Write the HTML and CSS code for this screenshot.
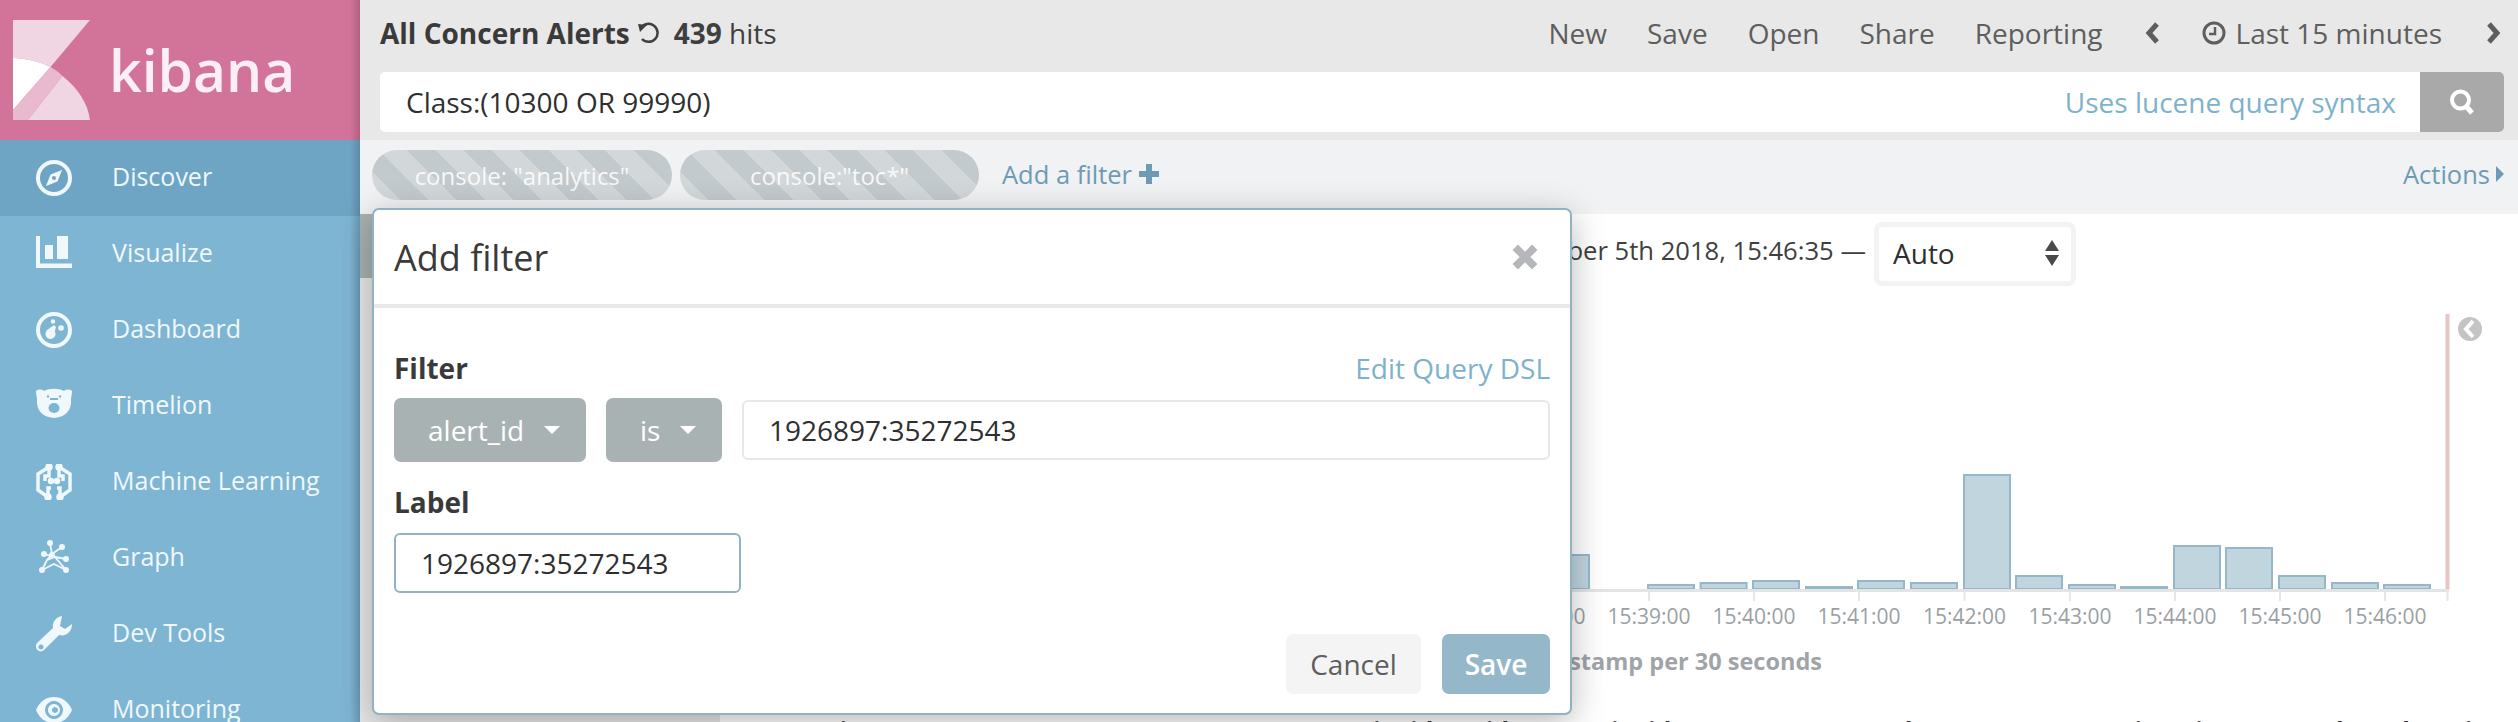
FILE: index.html
```html
<!DOCTYPE html>
<html lang="en">
<head>
<meta charset="utf-8">
<title>Kibana Discover</title>
<link rel="stylesheet" href="styles.css">
</head>
<body>
<div class="app">
  <aside class="sidebar">
    <div class="brand">
      <svg class="brand-mark" viewBox="0 0 77 100" width="77" height="100">
        <path d="M0 0H77L37.5 47C27 42 14 38.5 0 38Z" fill="#f0d6e2"/>
        <path d="M0 38C14 38.5 27 42 37.5 47L0 90Z" fill="#ffffff"/>
        <path d="M0 90L37.5 47C41 49 46 52 49.5 56L15 100H0Z" fill="#e9b9cf"/>
        <path d="M15 100L49.5 56C65 68 75 84 77 100Z" fill="#f0d6e2"/>
      </svg>
      <span class="brand-name">kibana</span>
    </div>
    <nav class="nav">
      <a class="nav-item active">
        <svg class="nav-icon" viewBox="0 0 36 36"><circle cx="18" cy="18" r="16" fill="none" stroke="currentColor" stroke-width="4"/><path d="M26 10L21.5 21.5L10 26L14.500 14.500Z" fill="currentColor"/><circle cx="18" cy="18" r="2" fill="#6fa5c4"/></svg>
        <span>Discover</span>
      </a>
      <a class="nav-item">
        <svg class="nav-icon" viewBox="0 0 36 36"><path d="M0 0H4V27.500H36V32H0Z" fill="currentColor"/><rect x="9" y="9" width="8" height="14" fill="currentColor"/><rect x="21" y="0" width="11" height="23" fill="currentColor"/></svg>
        <span>Visualize</span>
      </a>
      <a class="nav-item">
        <svg class="nav-icon" viewBox="0 0 36 36"><circle cx="18" cy="18" r="16" fill="none" stroke="currentColor" stroke-width="4"/><path d="M10.500 18.500L18 13L20 15L17.500 24.500Z" fill="currentColor"/><circle cx="14.500" cy="22" r="5" fill="currentColor"/><circle cx="17" cy="9.500" r="2.200" fill="currentColor"/><circle cx="25" cy="16" r="2.800" fill="currentColor"/></svg>
        <span>Dashboard</span>
      </a>
      <a class="nav-item">
        <svg class="nav-icon" viewBox="0 0 36 36"><path d="M0 3C2 1 6 1 8 3C13 0 23 0 28 3C30 1 34 1 36 3C36 7 35 9 35 11C36 22 30 29 18 30C6 29 0 22 1 11C1 9 0 7 0 3Z" fill="currentColor"/><ellipse cx="18" cy="20" rx="5.500" ry="5" fill="#7eb5d3"/><rect x="14" y="10" width="8" height="2" fill="#7eb5d3"/><circle cx="12" cy="8.500" r="1.200" fill="#7eb5d3"/><circle cx="24" cy="8.500" r="1.200" fill="#7eb5d3"/></svg>
        <span>Timelion</span>
      </a>
      <a class="nav-item">
        <svg class="nav-icon" viewBox="0 0 36 36" fill="none" stroke="currentColor" stroke-width="3.500"><path d="M13 3L2 10V26L12 33"/><path d="M23 3L34 10V26L24 33"/><path d="M13 3V12H9V17"/><path d="M23 3V12H27V17"/><path d="M12 33V24H15"/><path d="M24 33V24H21"/><circle cx="13" cy="3" r="2" fill="currentColor"/><circle cx="23" cy="3" r="2" fill="currentColor"/><circle cx="12" cy="33" r="2" fill="currentColor"/><circle cx="24" cy="33" r="2" fill="currentColor"/><circle cx="15" cy="17" r="1.500" fill="currentColor"/><circle cx="21" cy="17" r="1.500" fill="currentColor"/></svg>
        <span>Machine Learning</span>
      </a>
      <a class="nav-item">
        <svg class="nav-icon" viewBox="0 0 36 36"><g fill="none" stroke="currentColor" stroke-width="1.800"><path d="M14 3L16 14L11 20L6 30"/><path d="M26 7L16 14"/><path d="M8 14L19 17L30 19"/><path d="M11 20L19 17L30 30L18 24L6 30"/></g><g fill="currentColor"><circle cx="14" cy="3" r="3"/><circle cx="26" cy="7" r="3"/><circle cx="8" cy="14" r="3"/><circle cx="16" cy="15" r="3"/><circle cx="30" cy="19" r="3"/><circle cx="6" cy="30" r="3"/><circle cx="30" cy="30" r="3"/></g></svg>
        <span>Graph</span>
      </a>
      <a class="nav-item">
        <svg class="nav-icon" viewBox="0 0 36 36"><path fill-rule="evenodd" d="M26 0C20 1 16 6 17 12L1 27C-1 30 0 34 3 35C5 36 7 35 9 33L23 19C30 21 36 16 36 8L29 13L24 10L25 5ZM5 28.500A2.500 2.500 0 1 0 5.010 28.500Z" fill="currentColor"/></svg>
        <span>Dev Tools</span>
      </a>
      <a class="nav-item">
        <svg class="nav-icon" viewBox="0 0 36 36"><path fill-rule="evenodd" d="M0 18C4 9 10 5 18 5C26 5 32 9 36 18C32 27 26 31 18 31C10 31 4 27 0 18ZM18 9A9 9 0 1 0 18.010 9ZM18 12A6 6 0 1 1 17.990 12ZM19 15A3 3 0 1 0 19.010 15Z" fill="currentColor"/></svg>
        <span>Monitoring</span>
      </a>
    </nav>
  </aside>

  <main class="main">
    <header class="topbar">
      <div class="topbar-row">
        <div class="title">
          <strong>All Concern Alerts</strong>
          <svg class="reset-icon" viewBox="0 0 22 22"><path d="M3 6A9 9 0 1 1 4 17" fill="none" stroke="#3f3f3f" stroke-width="2.500"/><path d="M0 2L9 3L2 10Z" fill="#3f3f3f"/></svg>
          <span class="hits"><strong>439</strong> hits</span>
        </div>
        <div class="menu">
          <a>New</a>
          <a>Save</a>
          <a>Open</a>
          <a>Share</a>
          <a>Reporting</a>
          <div class="timepicker">
            <svg class="chev" viewBox="0 0 16 24"><path d="M12 3L4 12L12 21" fill="none" stroke="currentColor" stroke-width="5"/></svg>
            <span class="range">
              <svg class="clock" viewBox="0 0 24 24"><circle cx="12" cy="12" r="10" fill="none" stroke="currentColor" stroke-width="3"/><path d="M13 6V13H7" fill="none" stroke="currentColor" stroke-width="2.500"/></svg>
              Last 15 minutes
            </span>
            <svg class="chev" viewBox="0 0 16 24"><path d="M4 3L12 12L4 21" fill="none" stroke="currentColor" stroke-width="5"/></svg>
          </div>
        </div>
      </div>
      <div class="query">
        <span class="query-text">Class:(10300 OR 99990)</span>
        <a class="query-hint">Uses lucene query syntax</a>
        <div class="query-btn">
          <svg viewBox="0 0 28 28" width="28" height="28"><circle cx="12.500" cy="12" r="8.500" fill="none" stroke="#fff" stroke-width="4"/><path d="M18 18L24 25" stroke="#fff" stroke-width="5"/></svg>
        </div>
      </div>
    </header>

    <section class="filterbar">
      <span class="pill pill-a">console: "analytics"</span>
      <span class="pill pill-b">console:"toc*"</span>
      <a class="add-filter">Add a filter <svg class="plus" viewBox="0 0 20 20"><path d="M7 0H13V7H20V13H13V20H7V13H0V7H7Z" fill="currentColor"/></svg></a>
      <a class="actions">Actions <svg class="caret" viewBox="0 0 8 18"><path d="M0 1L8 9L0 17Z" fill="currentColor"/></svg></a>
    </section>

    <div class="content">
      <aside class="fields"><div class="fields-head"></div></aside>
      <section class="results">
        <div class="timerow">
          <span class="timespan">October 5th 2018, 15:31:35 — October 5th 2018, 15:46:35 —</span>
          <div class="interval">
            <span>Auto</span>
            <svg class="updown" viewBox="0 0 14 26"><path d="M7 0L14 11H0Z M0 15H14L7 26Z" fill="#4a4a4a"/></svg>
          </div>
        </div>
        <div class="chart-wrap">
          <svg class="chart" viewBox="720 300 1798 384" width="1798" height="384">
            <g class="bars">
              <rect x="1438" y="560" width="46" height="29"/>
              <rect x="1490" y="575" width="46" height="14"/>
              <rect x="1543" y="555" width="46" height="34"/>
              <rect x="1648" y="585" width="46" height="4"/>
              <rect x="1700.600" y="583" width="46" height="6"/>
              <rect x="1753" y="581" width="46" height="8"/>
              <rect x="1806" y="587" width="46" height="2"/>
              <rect x="1858" y="581" width="46" height="8"/>
              <rect x="1911" y="583" width="46" height="6"/>
              <rect x="1964" y="475" width="46" height="114"/>
              <rect x="2016" y="576" width="46" height="13"/>
              <rect x="2069" y="585" width="46" height="4"/>
              <rect x="2121" y="587" width="46" height="2"/>
              <rect x="2174" y="546" width="46" height="43"/>
              <rect x="2226" y="548" width="46" height="41"/>
              <rect x="2279" y="576" width="46" height="13"/>
              <rect x="2332" y="583" width="46" height="6"/>
              <rect x="2384" y="585" width="46" height="4"/>
            </g>
            <path class="now" d="M2447.500 314V589"/>
            <path class="axis" d="M720 590.500H2449"/>
            <path class="tick" d="M1544 592V601M1649 592V601M1754 592V601M1859 592V601M1964.500 592V601M2070 592V601M2175 592V601M2280 592V601M2385 592V601M2447.500 592V601"/>
            <g class="ticklabels">
              <text x="1544" y="624">15:38:00</text>
              <text x="1649" y="624">15:39:00</text>
              <text x="1754" y="624">15:40:00</text>
              <text x="1859" y="624">15:41:00</text>
              <text x="1964.500" y="624">15:42:00</text>
              <text x="2070" y="624">15:43:00</text>
              <text x="2175" y="624">15:44:00</text>
              <text x="2280" y="624">15:45:00</text>
              <text x="2385" y="624">15:46:00</text>
            </g>
            <text class="axis-title" x="1822" y="670">@timestamp per 30 seconds</text>
            <circle class="legend-toggle" cx="2470" cy="329" r="12"/>
            <path d="M2473 321L2466 329L2473 337" fill="none" stroke="#fff" stroke-width="4"/>
          </svg>
        </div>
        <div class="table-head">
          <span>Time</span>
          <span>incident_id</span>
          <span>incident_state</span>
          <span>console</span>
          <span>situation</span>
          <span>product_domain</span>
        </div>
      </section>
    </div>
  </main>
</div>

<div class="modal">
  <div class="modal-head">
    <h2>Add filter</h2>
    <svg class="modal-x" viewBox="0 0 24 24"><path d="M3 3L21 21M21 3L3 21" stroke="#b5b7ba" stroke-width="7"/></svg>
  </div>
  <div class="modal-body">
    <div class="label-row">
      <label class="field-label">Filter</label>
      <a class="dsl">Edit Query DSL</a>
    </div>
    <div class="filter-row">
      <div class="drop drop-field">alert_id <i class="tri"></i></div>
      <div class="drop drop-op">is <i class="tri"></i></div>
      <div class="input input-grow">1926897:35272543</div>
    </div>
    <label class="field-label label-second">Label</label>
    <div class="input input-label">1926897:35272543</div>
    <div class="modal-actions">
      <button class="btn btn-cancel">Cancel</button>
      <button class="btn btn-save">Save</button>
    </div>
  </div>
</div>
</body>
</html>
```
FILE: styles.css
```css
* { box-sizing: border-box; }
html, body { margin: 0; height: 722px; overflow: hidden; }
body { font-family: "Open Sans", "Liberation Sans", sans-serif; font-size: 28px; color: #3f3f3f; background: #fff; }
a { cursor: pointer; }

.app { display: flex; height: 722px; overflow: hidden; }

/* sidebar */
.sidebar { position: relative; flex: 0 0 360px; background: #7eb5d3; overflow: hidden; }
.sidebar::after { content: ""; position: absolute; top: 0; right: 0; bottom: 0; width: 10px; background: linear-gradient(to right, rgba(0,0,0,0), rgba(0,0,0,.16)); }
.brand { height: 140px; background: #d2739a; display: flex; align-items: center; padding-left: 13px; }
.brand-mark { flex: none; }
.brand-name { margin-left: 19px; font-size: 57px; font-weight: 600; line-height: 70px; color: #fbeef4; }
.nav { display: flex; flex-direction: column; }
.nav-item { flex: 0 0 76px; display: flex; align-items: center; padding-left: 36px; color: #f0f8fc; font-size: 25px; }
.nav-item span { padding-bottom: 5px; }
.nav-item.active { background: #6fa5c4; }
.nav-icon { width: 36px; height: 36px; margin-right: 40px; flex: none; }

/* main */
.main { flex: 1; display: flex; flex-direction: column; min-width: 0; }
.topbar { height: 140px; background: #e8e8e8; padding: 0 14px 8px 20px; display: flex; flex-direction: column; }
.topbar-row { height: 72px; display: flex; align-items: center; justify-content: space-between; padding: 0 3px 6px 0; }
.title { display: flex; align-items: center; color: #3a3a3a; }
.title strong { font-weight: 700; }
.reset-icon { width: 22px; height: 22px; margin: 0 14px 0 8px; }
.hits { color: #3f3f3f; }
.menu { display: flex; align-items: center; gap: 40px; color: #5e5e5e; }
.timepicker { display: flex; align-items: center; margin-left: 2px; }
.chev { width: 16px; height: 24px; color: #5e5e5e; }
.range { display: flex; align-items: center; margin: 0 43px 0 41px; white-space: nowrap; }
.clock { width: 24px; height: 24px; margin-right: 10px; }
.query { flex: 1; display: flex; align-items: center; background: #fff; border-radius: 5px; overflow: hidden; padding-left: 26px; }
.query-text { flex: 1; color: #2f2f2f; }
.query-hint { color: #7eb2cc; margin-right: 24px; }
.query-btn { width: 84px; align-self: stretch; background: #a9a9a9; display: flex; align-items: center; justify-content: center; }

/* filter bar */
.filterbar { height: 74px; background: #f0f2f4; display: flex; align-items: flex-start; padding: 10px 14px 0 12px; font-size: 25.500px; }
.pill { height: 50px; border-radius: 25px; display: flex; align-items: center; justify-content: center; font-size: 24px; color: rgba(255,255,255,.88); margin-right: 8px; background: repeating-linear-gradient(45deg, #d2d7d9 0 20px, #c3cacd 20px 40px); white-space: nowrap; }
.pill-a { width: 300px; }
.pill-b { width: 299px; }
.add-filter { margin-left: 15px; height: 50px; padding-bottom: 2px; display: flex; align-items: center; gap: 7px; color: #6d9bb5; }
.plus { width: 20px; height: 20px; }
.actions { margin-left: auto; height: 50px; padding-bottom: 2px; display: flex; align-items: center; gap: 6px; color: #6d9bb5; }
.caret { width: 8px; height: 18px; }

/* content */
.content { flex: 1; display: flex; min-height: 0; overflow: hidden; }
.fields { flex: 0 0 360px; background: #e8e8e8; }
.fields-head { height: 64px; background: #a9b1b1; }
.results { flex: 1; min-width: 0; display: flex; flex-direction: column; }
.timerow { flex: 0 0 86px; display: flex; align-items: flex-start; justify-content: flex-end; padding: 8px 442px 0 0; white-space: nowrap; }
.timespan { font-size: 25.600px; line-height: 58px; margin-right: 8px; color: #3f3f3f; }
.interval { width: 202px; height: 64px; border: 5px solid #f3f3f3; border-radius: 8px; display: flex; align-items: center; justify-content: space-between; padding: 0 12px 3px 14px; background: #fff; color: #2f2f2f; flex: none; }
.updown { width: 14px; height: 26px; }
.chart-wrap { flex: 0 0 384px; }
.chart { display: block; }
.bars rect { fill: #c1d5df; stroke: #94b8ca; stroke-width: 2; }
.now { stroke: #e8c4c4; stroke-width: 4; fill: none; }
.axis { stroke: #e4e4e4; stroke-width: 3; fill: none; }
.tick { stroke: #e6e6e6; stroke-width: 2; fill: none; }
.ticklabels text { font-family: "Open Sans", sans-serif; font-size: 21px; fill: #9a9fa4; text-anchor: middle; }
.axis-title { font-family: "Open Sans", sans-serif; font-size: 23.500px; font-weight: 700; fill: #a0a4a8; text-anchor: end; }
.legend-toggle { fill: #c4c4c4; }
.table-head { flex: none; display: grid; grid-template-columns: 548px 238px 221px 290px 163px 1fr; padding: 29px 0 0 105px; font-size: 25px; font-weight: 700; color: #333; line-height: 34px; white-space: nowrap; }

/* modal */
.modal { position: absolute; left: 372px; top: 208px; width: 1200px; height: 507px; background: #fff; border: 2px solid #8fb3c5; border-radius: 7px; box-shadow: 0 8px 34px rgba(0,0,0,.28); display: flex; flex-direction: column; }
.modal-head { flex: 0 0 98px; display: flex; align-items: center; justify-content: space-between; padding: 0 32px 0 20px; border-bottom: 4px solid #e8e8e8; }
.modal-head h2 { margin: 0; font-size: 36px; font-weight: 400; color: #3a3a3a; }
.modal-x { width: 26px; height: 26px; }
.modal-body { flex: 1; padding: 41px 20px 19px; display: flex; flex-direction: column; }
.label-row { display: flex; justify-content: space-between; align-items: center; height: 38px; }
.field-label { font-weight: 700; color: #3a3a3a; line-height: 38px; }
.dsl { color: #7eb2cc; }
.filter-row { display: flex; align-items: center; gap: 20px; margin-top: 11px; }
.drop { height: 64px; background: #a9b2b3; border-radius: 7px; color: #fff; display: flex; align-items: center; gap: 20px; flex: none; padding-left: 34px; }
.drop-field { width: 192px; }
.drop-op { width: 116px; }
.tri { display: block; width: 0; height: 0; border-left: 8px solid transparent; border-right: 8px solid transparent; border-top: 8px solid #fff; }
.input { height: 60px; border: 2px solid #e8e8e8; border-radius: 6px; display: flex; align-items: center; padding: 0 25px; color: #2f2f2f; background: #fff; }
.input-grow { flex: 1; }
.label-second { margin-top: 21px; }
.input-label { width: 347px; margin-top: 12px; border-color: #8fb3c5; }
.modal-actions { margin-top: auto; display: flex; justify-content: flex-end; gap: 21px; }
.btn { height: 60px; border: 0; border-radius: 7px; font: inherit; }
.btn-cancel { width: 135px; background: #f4f4f4; color: #5e5e5e; }
.btn-save { width: 108px; background: #94b8ca; color: #fff; font-weight: 600; }
```
